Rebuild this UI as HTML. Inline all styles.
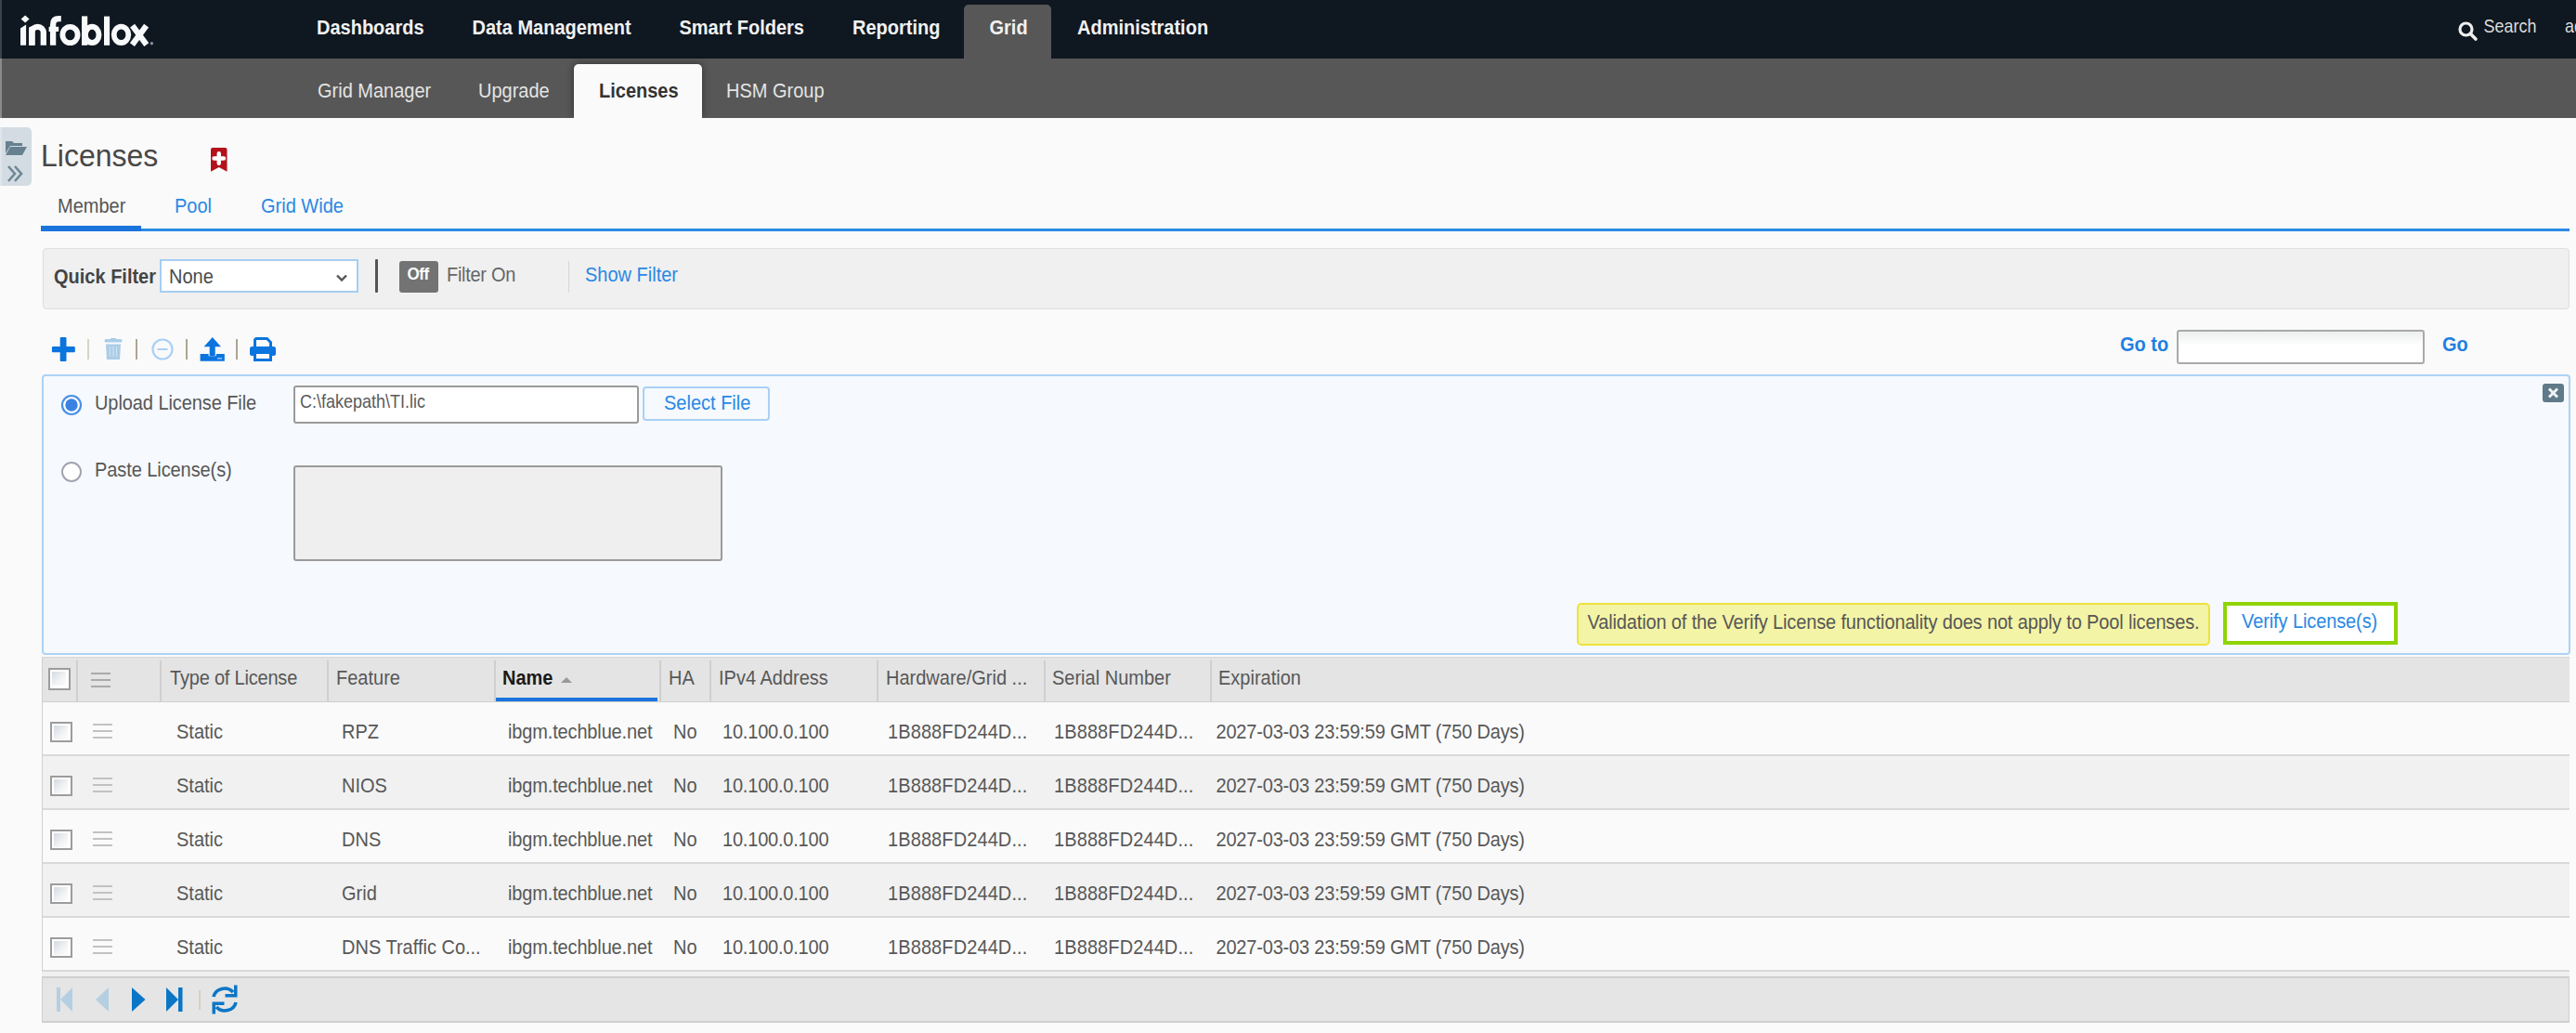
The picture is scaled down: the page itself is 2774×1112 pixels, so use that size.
<!DOCTYPE html>
<html><head><meta charset="utf-8">
<style>
*{margin:0;padding:0;box-sizing:border-box}
html,body{width:2774px;height:1112px;overflow:hidden;background:#fafafa;font-family:"Liberation Sans",sans-serif;font-size:20px;line-height:20px;color:#444}
.a{position:absolute}
.t{position:absolute;white-space:nowrap;line-height:20px;font-size:20px;transform:scaleY(1.1);transform-origin:0 85%}
.b{font-weight:bold}
svg{position:absolute;overflow:visible}
</style></head><body>
<div class="a" style="left:0px;top:0px;width:2774px;height:63px;background:#0f1720"></div>
<div class="a" style="left:0px;top:0px;width:2px;height:63px;background:#3a424c"></div>
<div class="a" style="left:1038px;top:5px;width:94px;height:58px;background:#575757;border-radius:5px 5px 0 0"></div>
<svg style="left:0;top:0" width="200" height="62" viewBox="0 0 200 62"><g fill="#f8f9fa"><path d="M27.1 16.6L31.6 20.6L27.1 24.6L22.6 20.6z"/><path d="M22 30.4L28.1 26.6V48.8H22z"/><path d="M31.1 29.4L37.6 26.4V48.8H31.1z"/><rect x="52.6" y="28.8" width="10.6" height="5.2"/><rect x="88" y="17.4" width="6.2" height="31.4"/><rect x="112" y="17.6" width="6.1" height="31.2"/></g><g fill="none" stroke="#f8f9fa"><path d="M34.4 48.8V35A6.2 6.2 0 0 1 46.8 35V48.8" stroke-width="6.3"/><path d="M57.1 48.8V26.5Q57.1 20.2 63.3 20.2H65.8" stroke-width="6.3"/><ellipse cx="75.5" cy="37.5" rx="8.1" ry="8.7" stroke-width="5.8"/><ellipse cx="99.2" cy="37.4" rx="7.3" ry="8.6" stroke-width="5.9"/><ellipse cx="130.5" cy="37.3" rx="7.8" ry="8.7" stroke-width="5.8"/><path d="M142.6 27.6L157.8 48.2M157.6 27.6L142.4 48.2" stroke-width="6.2"/></g><circle cx="163.4" cy="46.8" r="1.7" fill="#8a9098"/></svg>
<div class="t b" style="left:341px;top:20px;color:#f2f2f2">Dashboards</div>
<div class="t b" style="left:508.5px;top:20px;color:#f2f2f2">Data Management</div>
<div class="t b" style="left:731.5px;top:20px;color:#f2f2f2">Smart Folders</div>
<div class="t b" style="left:918px;top:20px;color:#f2f2f2">Reporting</div>
<div class="t b" style="left:1065.5px;top:20px;color:#f2f2f2">Grid</div>
<div class="t b" style="left:1160px;top:20px;color:#f2f2f2">Administration</div>
<svg style="left:2646px;top:22px" width="24" height="24" viewBox="0 0 24 24"><circle cx="9.5" cy="9.5" r="6.5" fill="none" stroke="#eee" stroke-width="3.2"/><line x1="14.5" y1="14.5" x2="20" y2="20" stroke="#eee" stroke-width="3.6" stroke-linecap="round"/></svg>
<div class="t " style="left:2674.5px;top:20px;color:#dcdcdc;font-size:18px;line-height:18px">Search</div>
<div class="t " style="left:2762px;top:20px;color:#dcdcdc;font-size:18px;line-height:18px">admin</div>
<div class="a" style="left:0px;top:63px;width:2774px;height:64px;background:#575757"></div>
<div class="a" style="left:0px;top:63px;width:2px;height:64px;background:#8a8a8a"></div>
<div class="a" style="left:618px;top:69px;width:138px;height:58px;background:#fafafa;border-radius:5px 5px 0 0;box-shadow:0 0 9px rgba(0,0,0,.45)"></div>
<div class="a" style="left:600px;top:127px;width:180px;height:12px;background:#fafafa"></div>
<div class="t " style="left:342px;top:88px;color:#e4e4e4">Grid Manager</div>
<div class="t " style="left:515px;top:88px;color:#e4e4e4">Upgrade</div>
<div class="t b" style="left:645px;top:88px;color:#333">Licenses</div>
<div class="t " style="left:782px;top:88px;color:#e4e4e4">HSM Group</div>
<div class="a" style="left:0px;top:137px;width:34px;height:63px;background:#d3dce2;border-radius:0 5px 5px 0"></div>
<div class="a" style="left:0px;top:137px;width:2px;height:63px;background:#dfe5ea"></div>
<svg style="left:5px;top:150px" width="24" height="18" viewBox="0 0 24 18"><path d="M1 2h7l2 2h9v3H6L1 15z" fill="#67808f"/><path d="M6 8h18l-5 9H1z" fill="#67808f"/></svg>
<svg style="left:7px;top:177px" width="18" height="20" viewBox="0 0 18 20"><path d="M2 2l7 8-7 8M9 2l7 8-7 8" fill="none" stroke="#6f8796" stroke-width="2.6"/></svg>
<div class="t " style="left:44px;top:152px;color:#474747;font-size:32px;line-height:32px;transform:scaleY(1.06)">Licenses</div>
<svg style="left:227px;top:159px" width="18" height="26" viewBox="0 0 18 26"><path d="M2 0h13.5a2 2 0 0 1 2 2V25.7L8.75 20.9L0 25.7V2a2 2 0 0 1 2-2z" fill="#b3121b"/><path d="M8.75 6.2v10.6M3.5 11.5h10.5" stroke="#fff" stroke-width="4.4" stroke-linecap="round"/></svg>
<div class="t " style="left:62px;top:212px;color:#555">Member</div>
<div class="t " style="left:188px;top:212px;color:#2a88e4">Pool</div>
<div class="t " style="left:281px;top:212px;color:#2a88e4">Grid Wide</div>
<div class="a" style="left:44px;top:246px;width:2723px;height:3px;background:#2b89e6"></div>
<div class="a" style="left:44px;top:243px;width:108px;height:6px;background:#1a74dc"></div>
<div class="a" style="left:46px;top:267px;width:2721px;height:66px;background:#f0f0f0;border:1px solid #dedede;border-radius:4px"></div>
<div class="t b" style="left:58px;top:288px;color:#444">Quick Filter</div>
<div class="a" style="left:172px;top:279px;width:214px;height:36px;background:#fff;border:2px solid #a6cdf3"></div>
<div class="t " style="left:182px;top:288px;color:#4a4a4a">None</div>
<svg style="left:362px;top:295px" width="12" height="9" viewBox="0 0 12 9"><path d="M1 1.5l5 5 5-5" fill="none" stroke="#555" stroke-width="2.4"/></svg>
<div class="a" style="left:404px;top:279px;width:3px;height:36px;background:#555;border-radius:1px"></div>
<div class="a" style="left:430px;top:281px;width:42px;height:34px;background:#737373;border-radius:3px"></div>
<div class="t b" style="left:438.5px;top:287px;color:#fff;font-size:17px;line-height:17px;letter-spacing:-0.5px">Off</div>
<div class="t " style="left:481px;top:286px;color:#666;letter-spacing:-0.3px">Filter On</div>
<div class="a" style="left:612px;top:281px;width:1px;height:34px;background:#d6d6d6"></div>
<div class="t " style="left:630px;top:286px;color:#2a88e4">Show Filter</div>
<svg style="left:55px;top:363px" width="26" height="26" viewBox="0 0 26 26"><path d="M9.7 1a1 1 0 0 1 1-1h4.8a1 1 0 0 1 1 1v9.1h8.3a1 1 0 0 1 1 1v4.2a1 1 0 0 1-1 1h-8.3V25a1 1 0 0 1-1 1h-4.8a1 1 0 0 1-1-1V16.3H1.9a1 1 0 0 1-1-1V11.1a1 1 0 0 1 1-1h7.8z" fill="#0b74de"/></svg>
<div class="a" style="left:94px;top:365px;width:2px;height:22px;background:#d8d3c8"></div>
<svg style="left:112px;top:364px" width="20" height="24" viewBox="0 0 20 24"><rect x="0.5" y="1" width="19" height="3.6" rx="1.5" fill="#a9cde8"/><rect x="7" y="0" width="6" height="2" fill="#a9cde8"/><path d="M2 6.5h16l-1 16.5H3z" fill="#a9cde8"/><path d="M6.5 9v11M10 9v11M13.5 9v11" stroke="#cfe2f0" stroke-width="1.2"/></svg>
<div class="a" style="left:146px;top:365px;width:2px;height:22px;background:#aba594"></div>
<svg style="left:163px;top:364px" width="24" height="24" viewBox="0 0 24 24"><circle cx="12" cy="12" r="10.5" fill="none" stroke="#a8d0f8" stroke-width="2.2"/><path d="M6.5 12h11" stroke="#a8d0f8" stroke-width="2"/></svg>
<div class="a" style="left:200px;top:365px;width:2px;height:22px;background:#aba594"></div>
<svg style="left:215px;top:363px" width="27" height="26" viewBox="0 0 27 26"><path d="M13.8 0L23 10.2h-6.3V20h-6V10.2H4.6z" fill="#0b74de"/><path d="M0.6 18h9v2.2h8.2V18h9v7.8H0.6z" fill="#0b74de"/><path d="M19 22.8h5" stroke="#8fbff0" stroke-width="1.6"/></svg>
<div class="a" style="left:254px;top:365px;width:2px;height:22px;background:#aba594"></div>
<svg style="left:269px;top:363px" width="28" height="26" viewBox="0 0 28 26"><path d="M5.5 1.5h13l4 4v5" fill="none" stroke="#0b74de" stroke-width="3"/><path d="M5.5 10V1.5" stroke="#0b74de" stroke-width="3"/><rect x="0" y="10" width="28" height="10" rx="2.5" fill="#0b74de"/><rect x="5.5" y="16.5" width="17" height="8" fill="#fafafa" stroke="#0b74de" stroke-width="3"/></svg>
<div class="t b" style="left:2283px;top:361px;color:#1f7fe2">Go to</div>
<div class="a" style="left:2344px;top:355px;width:267px;height:37px;background:linear-gradient(#eceeef,#fff 45%);border:2px solid #a9a9a9;border-radius:3px"></div>
<div class="t b" style="left:2630px;top:361px;color:#1f7fe2">Go</div>
<div class="a" style="left:45px;top:403px;width:2723px;height:302px;background:#f6f9fd;border:2px solid #add2f6;border-radius:4px"></div>
<svg style="left:65px;top:424px" width="24" height="24" viewBox="0 0 24 24"><circle cx="12" cy="12" r="10" fill="#fff" stroke="#4a90e6" stroke-width="2.2"/><circle cx="12" cy="12" r="6.7" fill="#3a82e2"/></svg>
<div class="t " style="left:102px;top:424px;color:#575757;letter-spacing:-0.08px">Upload License File</div>
<div class="a" style="left:316px;top:415px;width:372px;height:41px;background:#fff;border:2px solid #9a9a9a;border-radius:3px"></div>
<div class="t " style="left:323px;top:424px;color:#5a5a5a;font-size:18px;line-height:18px">C:\fakepath\TI.lic</div>
<div class="a" style="left:692px;top:416px;width:137px;height:37px;background:#f6f9fd;border:2px solid #a9d0f6;border-radius:4px"></div>
<div class="t " style="left:715px;top:424px;color:#2a88e4">Select File</div>
<svg style="left:65px;top:496px" width="24" height="24" viewBox="0 0 24 24"><circle cx="12" cy="12" r="10" fill="#fff" stroke="#a3a3b0" stroke-width="2"/></svg>
<div class="t " style="left:102px;top:496px;color:#575757;letter-spacing:-0.08px">Paste License(s)</div>
<div class="a" style="left:316px;top:501px;width:462px;height:103px;background:#efefef;border:2px solid #9a9a9a;border-radius:3px"></div>
<div class="a" style="left:2738px;top:413px;width:23px;height:20px;background:#5f7a88;border-radius:3px"></div>
<svg style="left:2743px;top:417px" width="13" height="12" viewBox="0 0 13 12"><path d="M2 1.5l9 9M11 1.5l-9 9" stroke="#eef2f4" stroke-width="3"/></svg>
<div class="a" style="left:1698px;top:649px;width:682px;height:46px;background:#f4f4a6;border:2px solid #efe23c;border-radius:5px"></div>
<div class="t " style="left:1709.5px;top:660px;color:#575757;letter-spacing:-0.14px">Validation of the Verify License functionality does not apply to Pool licenses.</div>
<div class="a" style="left:2394px;top:648px;width:188px;height:46px;background:#fff;border:4px solid #8fd400"></div>
<div class="t " style="left:2414px;top:659px;color:#2a88e4;letter-spacing:-0.1px">Verify License(s)</div>
<div class="a" style="left:45px;top:707px;width:2722px;height:50px;background:#e4e4e4;border-top:1px solid #d6d6d6;border-bottom:2px solid #d0d0d0;border-left:1px solid #d0d0d0"></div>
<div class="a" style="left:82px;top:711px;width:2px;height:44px;background:#cfcfcf"></div>
<div class="a" style="left:172px;top:711px;width:2px;height:44px;background:#cfcfcf"></div>
<div class="a" style="left:352px;top:711px;width:2px;height:44px;background:#cfcfcf"></div>
<div class="a" style="left:532px;top:711px;width:2px;height:44px;background:#cfcfcf"></div>
<div class="a" style="left:710px;top:711px;width:2px;height:44px;background:#cfcfcf"></div>
<div class="a" style="left:764px;top:711px;width:2px;height:44px;background:#cfcfcf"></div>
<div class="a" style="left:944px;top:711px;width:2px;height:44px;background:#cfcfcf"></div>
<div class="a" style="left:1124px;top:711px;width:2px;height:44px;background:#cfcfcf"></div>
<div class="a" style="left:1303px;top:711px;width:2px;height:44px;background:#cfcfcf"></div>
<div class="a" style="left:52px;top:719px;width:24px;height:24px;border:2.5px solid #9c9c9c;background:#fff"><div class="a" style="left:2px;top:2px;width:15px;height:15px;background:linear-gradient(135deg,#d3d9e1,#f0f2f4 55%,#fdfdfd)"></div></div>
<div class="a" style="left:98px;top:724px;width:21px;height:2px;background:#aaaaaa"></div>
<div class="a" style="left:98px;top:731px;width:21px;height:2px;background:#aaaaaa"></div>
<div class="a" style="left:98px;top:738px;width:21px;height:2px;background:#aaaaaa"></div>
<div class="t " style="left:183px;top:720px;color:#585858;letter-spacing:-0.2px">Type of License</div>
<div class="t " style="left:362px;top:720px;color:#585858">Feature</div>
<div class="t b" style="left:541px;top:720px;color:#1a1a1a">Name</div>
<div class="t " style="left:720px;top:720px;color:#585858">HA</div>
<div class="t " style="left:774px;top:720px;color:#585858">IPv4 Address</div>
<div class="t " style="left:954px;top:720px;color:#585858">Hardware/Grid ...</div>
<div class="t " style="left:1133px;top:720px;color:#585858">Serial Number</div>
<div class="t " style="left:1312px;top:720px;color:#585858">Expiration</div>
<svg style="left:603px;top:728px" width="14" height="8" viewBox="0 0 14 8"><path d="M1 7L7 1l6 6z" fill="#999"/></svg>
<div class="a" style="left:534px;top:751px;width:174px;height:4px;background:#1a74dc"></div>
<div class="a" style="left:45px;top:756px;width:2722px;height:58px;background:#fafafa;border-left:1px solid #d0d0d0;border-bottom:2px solid #d9d9d9"></div>
<div class="a" style="left:54px;top:777px;width:24px;height:22px;border:2.5px solid #9c9c9c;background:#fff"><div class="a" style="left:2px;top:2px;width:15px;height:15px;background:linear-gradient(135deg,#d3d9e1,#f0f2f4 55%,#fdfdfd)"></div></div>
<div class="a" style="left:100px;top:779px;width:21px;height:2px;background:#c2c2c2"></div>
<div class="a" style="left:100px;top:786px;width:21px;height:2px;background:#c2c2c2"></div>
<div class="a" style="left:100px;top:793px;width:21px;height:2px;background:#c2c2c2"></div>
<div class="t " style="left:190px;top:778px;color:#585858">Static</div>
<div class="t " style="left:368px;top:778px;color:#585858">RPZ</div>
<div class="t " style="left:547px;top:778px;color:#585858;letter-spacing:-0.15px">ibgm.techblue.net</div>
<div class="t " style="left:725px;top:778px;color:#585858">No</div>
<div class="t " style="left:778px;top:778px;color:#585858;letter-spacing:-0.2px">10.100.0.100</div>
<div class="t " style="left:956px;top:778px;color:#585858;letter-spacing:0.1px">1B888FD244D...</div>
<div class="t " style="left:1135px;top:778px;color:#585858;letter-spacing:0.1px">1B888FD244D...</div>
<div class="t " style="left:1309.5px;top:778px;color:#585858;letter-spacing:-0.19px">2027-03-03 23:59:59 GMT (750 Days)</div>
<div class="a" style="left:45px;top:814px;width:2722px;height:58px;background:#f1f1f1;border-left:1px solid #d0d0d0;border-bottom:2px solid #d9d9d9"></div>
<div class="a" style="left:54px;top:835px;width:24px;height:22px;border:2.5px solid #9c9c9c;background:#fff"><div class="a" style="left:2px;top:2px;width:15px;height:15px;background:linear-gradient(135deg,#d3d9e1,#f0f2f4 55%,#fdfdfd)"></div></div>
<div class="a" style="left:100px;top:837px;width:21px;height:2px;background:#c2c2c2"></div>
<div class="a" style="left:100px;top:844px;width:21px;height:2px;background:#c2c2c2"></div>
<div class="a" style="left:100px;top:851px;width:21px;height:2px;background:#c2c2c2"></div>
<div class="t " style="left:190px;top:836px;color:#585858">Static</div>
<div class="t " style="left:368px;top:836px;color:#585858">NIOS</div>
<div class="t " style="left:547px;top:836px;color:#585858;letter-spacing:-0.15px">ibgm.techblue.net</div>
<div class="t " style="left:725px;top:836px;color:#585858">No</div>
<div class="t " style="left:778px;top:836px;color:#585858;letter-spacing:-0.2px">10.100.0.100</div>
<div class="t " style="left:956px;top:836px;color:#585858;letter-spacing:0.1px">1B888FD244D...</div>
<div class="t " style="left:1135px;top:836px;color:#585858;letter-spacing:0.1px">1B888FD244D...</div>
<div class="t " style="left:1309.5px;top:836px;color:#585858;letter-spacing:-0.19px">2027-03-03 23:59:59 GMT (750 Days)</div>
<div class="a" style="left:45px;top:872px;width:2722px;height:58px;background:#fafafa;border-left:1px solid #d0d0d0;border-bottom:2px solid #d9d9d9"></div>
<div class="a" style="left:54px;top:893px;width:24px;height:22px;border:2.5px solid #9c9c9c;background:#fff"><div class="a" style="left:2px;top:2px;width:15px;height:15px;background:linear-gradient(135deg,#d3d9e1,#f0f2f4 55%,#fdfdfd)"></div></div>
<div class="a" style="left:100px;top:895px;width:21px;height:2px;background:#c2c2c2"></div>
<div class="a" style="left:100px;top:902px;width:21px;height:2px;background:#c2c2c2"></div>
<div class="a" style="left:100px;top:909px;width:21px;height:2px;background:#c2c2c2"></div>
<div class="t " style="left:190px;top:894px;color:#585858">Static</div>
<div class="t " style="left:368px;top:894px;color:#585858">DNS</div>
<div class="t " style="left:547px;top:894px;color:#585858;letter-spacing:-0.15px">ibgm.techblue.net</div>
<div class="t " style="left:725px;top:894px;color:#585858">No</div>
<div class="t " style="left:778px;top:894px;color:#585858;letter-spacing:-0.2px">10.100.0.100</div>
<div class="t " style="left:956px;top:894px;color:#585858;letter-spacing:0.1px">1B888FD244D...</div>
<div class="t " style="left:1135px;top:894px;color:#585858;letter-spacing:0.1px">1B888FD244D...</div>
<div class="t " style="left:1309.5px;top:894px;color:#585858;letter-spacing:-0.19px">2027-03-03 23:59:59 GMT (750 Days)</div>
<div class="a" style="left:45px;top:930px;width:2722px;height:58px;background:#f1f1f1;border-left:1px solid #d0d0d0;border-bottom:2px solid #d9d9d9"></div>
<div class="a" style="left:54px;top:951px;width:24px;height:22px;border:2.5px solid #9c9c9c;background:#fff"><div class="a" style="left:2px;top:2px;width:15px;height:15px;background:linear-gradient(135deg,#d3d9e1,#f0f2f4 55%,#fdfdfd)"></div></div>
<div class="a" style="left:100px;top:953px;width:21px;height:2px;background:#c2c2c2"></div>
<div class="a" style="left:100px;top:960px;width:21px;height:2px;background:#c2c2c2"></div>
<div class="a" style="left:100px;top:967px;width:21px;height:2px;background:#c2c2c2"></div>
<div class="t " style="left:190px;top:952px;color:#585858">Static</div>
<div class="t " style="left:368px;top:952px;color:#585858">Grid</div>
<div class="t " style="left:547px;top:952px;color:#585858;letter-spacing:-0.15px">ibgm.techblue.net</div>
<div class="t " style="left:725px;top:952px;color:#585858">No</div>
<div class="t " style="left:778px;top:952px;color:#585858;letter-spacing:-0.2px">10.100.0.100</div>
<div class="t " style="left:956px;top:952px;color:#585858;letter-spacing:0.1px">1B888FD244D...</div>
<div class="t " style="left:1135px;top:952px;color:#585858;letter-spacing:0.1px">1B888FD244D...</div>
<div class="t " style="left:1309.5px;top:952px;color:#585858;letter-spacing:-0.19px">2027-03-03 23:59:59 GMT (750 Days)</div>
<div class="a" style="left:45px;top:988px;width:2722px;height:58px;background:#fafafa;border-left:1px solid #d0d0d0;border-bottom:2px solid #d9d9d9"></div>
<div class="a" style="left:54px;top:1009px;width:24px;height:22px;border:2.5px solid #9c9c9c;background:#fff"><div class="a" style="left:2px;top:2px;width:15px;height:15px;background:linear-gradient(135deg,#d3d9e1,#f0f2f4 55%,#fdfdfd)"></div></div>
<div class="a" style="left:100px;top:1011px;width:21px;height:2px;background:#c2c2c2"></div>
<div class="a" style="left:100px;top:1018px;width:21px;height:2px;background:#c2c2c2"></div>
<div class="a" style="left:100px;top:1025px;width:21px;height:2px;background:#c2c2c2"></div>
<div class="t " style="left:190px;top:1010px;color:#585858">Static</div>
<div class="t " style="left:368px;top:1010px;color:#585858">DNS Traffic Co...</div>
<div class="t " style="left:547px;top:1010px;color:#585858;letter-spacing:-0.15px">ibgm.techblue.net</div>
<div class="t " style="left:725px;top:1010px;color:#585858">No</div>
<div class="t " style="left:778px;top:1010px;color:#585858;letter-spacing:-0.2px">10.100.0.100</div>
<div class="t " style="left:956px;top:1010px;color:#585858;letter-spacing:0.1px">1B888FD244D...</div>
<div class="t " style="left:1135px;top:1010px;color:#585858;letter-spacing:0.1px">1B888FD244D...</div>
<div class="t " style="left:1309.5px;top:1010px;color:#585858;letter-spacing:-0.19px">2027-03-03 23:59:59 GMT (750 Days)</div>
<div class="a" style="left:45px;top:1046px;width:2722px;height:6px;background:#f0f0f0"></div>
<div class="a" style="left:45px;top:1051px;width:2722px;height:50px;background:#e5e5e5;border:1px solid #cfcfcf;border-width:2px 1px 2px 1px"></div>
<svg style="left:61px;top:1063px" width="18" height="26" viewBox="0 0 18 26"><rect x="0" y="0" width="4" height="26" fill="#b5cfe2"/><path d="M17 0v26L4 13z" fill="#b5cfe2"/></svg>
<svg style="left:103px;top:1063px" width="15" height="26" viewBox="0 0 15 26"><path d="M14 0v26L0 13z" fill="#b5cfe2"/></svg>
<svg style="left:141px;top:1063px" width="16" height="26" viewBox="0 0 16 26"><path d="M1 0v26L15.5 13z" fill="#0b76c6"/></svg>
<svg style="left:179px;top:1063px" width="18" height="26" viewBox="0 0 18 26"><path d="M0 0v26L13 13z" fill="#0b76c6"/><rect x="13" y="0" width="4.5" height="26" fill="#0b76c6"/></svg>
<div class="a" style="left:214px;top:1066px;width:2px;height:21px;background:#d6d0c4"></div>
<svg style="left:227px;top:1060px" width="30" height="32" viewBox="0 0 30 32"><path d="M3 13A12 11 0 0 1 24 8" fill="none" stroke="#0b76c6" stroke-width="3.6"/><path d="M28.5 0.5v13h-13v-3.5h9.5V0.5z" fill="#0b76c6"/><path d="M27 19A12 11 0 0 1 6 24" fill="none" stroke="#0b76c6" stroke-width="3.6"/><path d="M1.5 31.5v-13h13v3.5H5v9.5z" fill="#0b76c6"/></svg>
</body></html>
